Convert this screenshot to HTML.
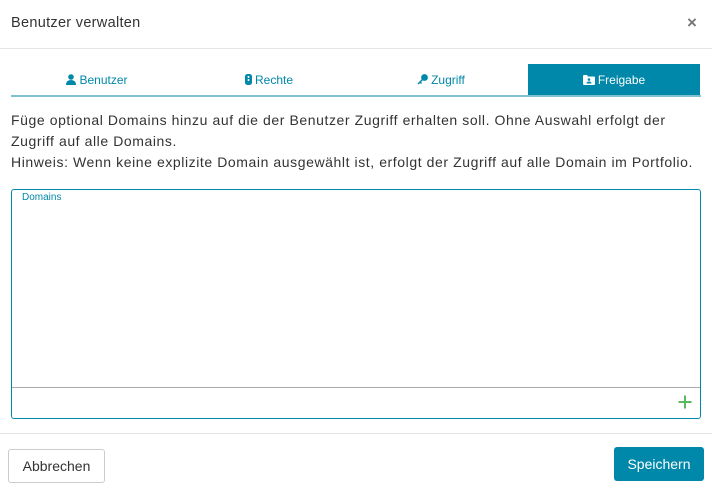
<!DOCTYPE html>
<html><head><meta charset="utf-8"><style>
*{box-sizing:border-box;margin:0;padding:0}
body{width:712px;height:496px;background:#fff;font-family:"Liberation Sans",sans-serif;color:#333;position:relative;overflow:hidden}
.abs{position:absolute}
.title{left:11px;top:15px;font-size:14.5px;color:#333;letter-spacing:0.3px}
.x{left:687px;top:13px;font-size:17px;color:#777;font-weight:bold}
.hr1{left:0;top:48px;width:712px;height:1px;background:#e5e5e5}
.tab{top:64px;height:31px;width:172px;font-size:12px;color:#0088aa;display:flex;align-items:center;justify-content:center;gap:3px}
.tab.act{background:#0088aa;color:#fff}
.ul{left:11px;top:95px;width:690px;height:2px;background:#7fc0d2}
.txt{left:11px;top:110px;font-size:14px;line-height:21px;color:#333;white-space:nowrap;letter-spacing:0.58px}
.box{left:11px;top:189px;width:690px;height:230px;border:1px solid #0088aa;border-radius:3px}
.lab{left:22px;top:192px;font-size:10px;color:#0088aa}
.inner{left:12px;top:387px;width:688px;height:1px;background:#aaa}
.plus{left:677px;top:394px}
.hr2{left:0;top:433px;width:712px;height:1px;background:#e5e5e5}
.btn1{left:8px;top:449px;width:97px;height:34px;border:1px solid #ccc;border-radius:3px;font-size:14px;display:flex;align-items:center;justify-content:center;color:#333}
.btn2{left:614px;top:447px;width:90px;height:34px;background:#0088aa;border-radius:3px;font-size:14px;display:flex;align-items:center;justify-content:center;color:#fff}
</style></head><body>
<div class="abs title">Benutzer verwalten</div>
<div class="abs x">×</div>
<div class="abs hr1"></div>
<div class="abs tab" style="left:11px"><svg width="10" height="11" viewBox="0 0 10 11"><circle cx="5" cy="3" r="2.8" fill="#0088aa"/><path d="M0 11 Q0 6 5 6 Q10 6 10 11Z" fill="#0088aa"/></svg>Benutzer</div>
<div class="abs tab" style="left:183px"><svg width="7" height="11" viewBox="0 0 7 11"><rect x="0" y="0" width="7" height="11" rx="2.5" fill="#0088aa"/><rect x="2.7" y="2" width="1.6" height="2" fill="#fff"/><rect x="2.7" y="5" width="1.6" height="2" fill="#fff"/></svg>Rechte</div>
<div class="abs tab" style="left:355px"><svg width="11" height="11" viewBox="0 0 11 11"><circle cx="7.5" cy="3.5" r="3.4" fill="#0088aa"/><path d="M5.5 4.5 L0.5 9.5 L1.5 10.5 L3 9 L4 10 L5 9 L4 8 L6.5 5.5Z" fill="#0088aa"/></svg>Zugriff</div>
<div class="abs tab act" style="left:528px"><svg width="12" height="10" viewBox="0 0 12 10"><path d="M0 1 Q0 0 1 0 H4 L5 1.5 H11 Q12 1.5 12 2.5 V9 Q12 10 11 10 H1 Q0 10 0 9Z" fill="#fff"/><circle cx="6" cy="4.5" r="1.3" fill="#0088aa"/><path d="M3.5 8.5 Q3.5 6.5 6 6.5 Q8.5 6.5 8.5 8.5Z" fill="#0088aa"/></svg>Freigabe</div>
<div class="abs ul"></div>
<div class="abs txt">Füge optional Domains hinzu auf die der Benutzer Zugriff erhalten soll. Ohne Auswahl erfolgt der<br>Zugriff auf alle Domains.<br>Hinweis: Wenn keine explizite Domain ausgewählt ist, erfolgt der Zugriff auf alle Domain im Portfolio.</div>
<div class="abs box"></div>
<div class="abs lab">Domains</div>
<div class="abs inner"></div>
<svg class="abs plus" width="16" height="16" viewBox="0 0 16 16"><path d="M8 1.5V14.5M1.5 8H14.5" stroke="#5cb85c" stroke-width="2"/></svg>
<div class="abs hr2"></div>
<div class="abs btn1">Abbrechen</div>
<div class="abs btn2">Speichern</div>
</body></html>
